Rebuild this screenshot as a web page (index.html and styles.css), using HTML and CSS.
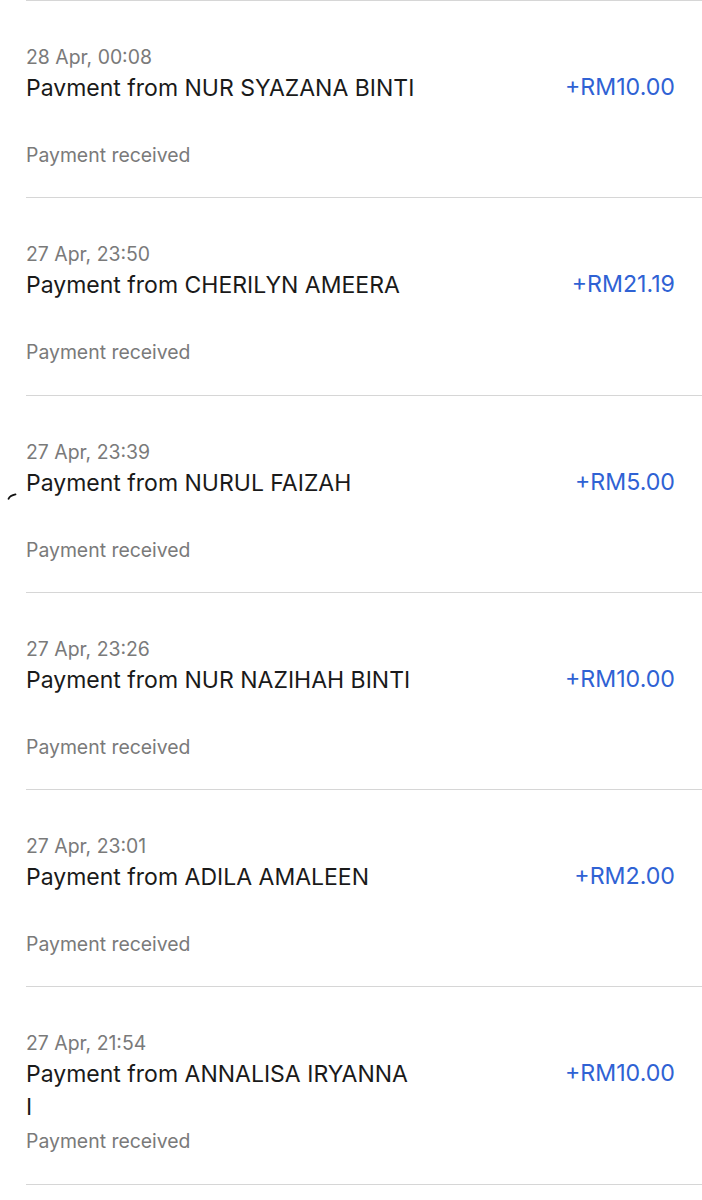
FILE: index.html
```html
<!DOCTYPE html>
<html>
<head>
<meta charset="utf-8">
<link rel="stylesheet" href="styles.css">
</head>
<body>
<div class="list">
  <div class="item">
    <div class="main">
      <div class="date">28 Apr, 00:08</div>
      <div class="name">Pavment from NUR SYAZANA BINTI</div>
      <div class="status">Payment received</div>
    </div>
    <div class="amount">+RM10.00</div>
  </div>
  <div class="item">
    <div class="main">
      <div class="date">27 Apr, 23:50</div>
      <div class="name">Payment from CHERILYN AMEERA</div>
      <div class="status">Payment received</div>
    </div>
    <div class="amount">+RM21.19</div>
  </div>
  <div class="item">
    <svg class="mark" width="10" height="8" viewBox="0 0 10 8"><path d="M1.5 6.8 Q3 3.6 8.5 2.4" fill="none" stroke="#111" stroke-width="1.8" stroke-linecap="round"/></svg>
    <div class="main">
      <div class="date">27 Apr, 23:39</div>
      <div class="name">Payment from NURUL FAIZAH</div>
      <div class="status">Payment received</div>
    </div>
    <div class="amount">+RM5.00</div>
  </div>
  <div class="item">
    <div class="main">
      <div class="date">27 Apr, 23:26</div>
      <div class="name">Payment from NUR NAZIHAH BINTI</div>
      <div class="status">Payment received</div>
    </div>
    <div class="amount">+RM10.00</div>
  </div>
  <div class="item">
    <div class="main">
      <div class="date">27 Apr, 23:01</div>
      <div class="name">Payment from ADILA AMALEEN</div>
      <div class="status">Payment received</div>
    </div>
    <div class="amount">+RM2.00</div>
  </div>
  <div class="item">
    <div class="main">
      <div class="date">27 Apr, 21:54</div>
      <div class="name">Payment from ANNALISA IRYANNA I</div>
      <div class="status">Payment received</div>
    </div>
    <div class="amount">+RM10.00</div>
  </div>
</div>
</body>
</html>
```

FILE: styles.css
```css
html, body {
  margin: 0;
  padding: 0;
  background: #ffffff;
}
body {
  font-family: Inter, "Noto Sans", "Liberation Sans", sans-serif;
  width: 702px;
  height: 1200px;
  overflow: hidden;
}
.list {
  margin-left: 26px;
  border-top: 1.5px solid #d6d6d6;
}
.item {
  position: relative;
  display: flex;
  align-items: flex-start;
  justify-content: space-between;
  height: 197.3px;
  padding: 40px 27px 0 0;
  box-sizing: border-box;
  border-bottom: 1.5px solid #d6d6d6;
}
.main {
  display: flex;
  flex-direction: column;
}
.date {
  font-size: 19.4px;
  line-height: 32px;
  color: #7a7a7a;
}
.name {
  font-size: 23px;
  line-height: 33px;
  height: 66px;
  width: 391px;
  margin-top: -1px;
  color: #1a1a1a;
}
.status {
  font-size: 19.4px;
  line-height: 32px;
  margin-top: 1px;
  color: #7a7a7a;
}
.amount {
  margin-top: 30px;
  font-size: 23.2px;
  line-height: 33px;
  color: #2f62d4;
}
.mark {
  position: absolute;
  left: -19px;
  top: 96px;
}
```
